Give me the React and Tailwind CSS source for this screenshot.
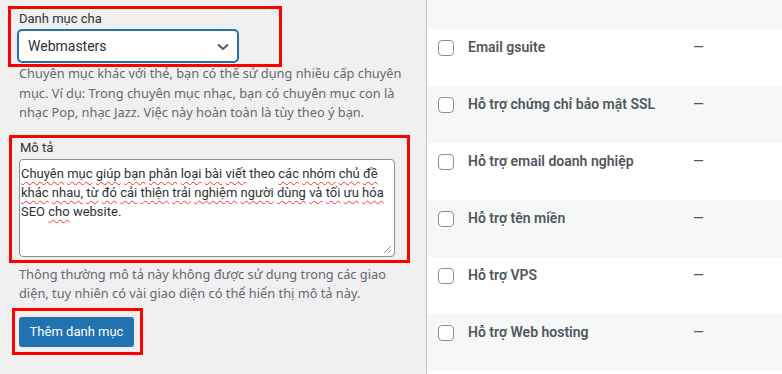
import React from "react";

const font = { fontFamily: "Roboto, 'Noto Sans', 'Liberation Sans', sans-serif" };
const noto = { fontFamily: "'Noto Sans', Roboto, 'Liberation Sans', sans-serif" };

function W({ children }) {
  return (
    <span className="underline decoration-wavy decoration-[#ff3030] decoration-[1px] underline-offset-[3px]">
      {children}
    </span>
  );
}

function Row({ name, gray }) {
  return (
    <div className={`flex items-start h-[57px] pl-[11px] pt-[11px] ${gray ? "bg-[#f6f7f7]" : "bg-white"}`}>
      <div className="w-4 h-4 shrink-0 rounded-[4px] border border-[#8c8f94] bg-white" />
      <div className="ml-[14px] w-[225px] -mt-[3px] text-[14px] leading-[20px] font-semibold text-[#50575e] whitespace-nowrap">
        {name}
      </div>
      <div className="-mt-[3px] text-[14px] leading-[20px] text-[#50575e]">—</div>
    </div>
  );
}

export default function App() {
  return (
    <div className="flex w-[782px] h-[374px] overflow-hidden bg-[#f0f0f1]" style={font}>
      {/* Left column */}
      <div className="w-[427px] shrink-0 border-r border-[#c3c4c7] flex flex-col">
        <div className="ml-[8px] mt-[6px] w-[274px] h-[61px] border-[3px] border-[#ff0000] pl-[7px]">
          <div className="text-[13px] leading-[20px] text-[#2c3338] pl-px">Danh mục cha</div>
          <div className="mt-px w-[220px] h-[32px] rounded-[4px] border border-[#2271b1] shadow-[0_0_0_1px_#2271b1] bg-white flex items-center justify-between pl-[9px] pr-[8px]">
            <span className="text-[14px] text-[#2c3338]">Webmasters</span>
            <svg width="12" height="8" viewBox="0 0 12 8" className="mt-px">
              <path d="M1 1.5l5 4.5 5-4.5" fill="none" stroke="#50575e" strokeWidth="2" />
            </svg>
          </div>
        </div>

        <div className="-mt-[3px] ml-[19px] text-[12.8px] leading-[19.5px] text-[#646970] whitespace-nowrap" style={noto}>
          Chuyên mục khác với thẻ, bạn có thể sử dụng nhiều cấp chuyên
          <br />
          mục. Ví dụ: Trong chuyên mục nhạc, bạn có chuyên mục con là
          <br />
          nhạc Pop, nhạc Jazz. Việc này hoàn toàn là tùy theo ý bạn.
        </div>

        <div className="mt-[12px] ml-[9px] w-[401px] h-[128px] border-[3px] border-[#ff0000] pl-[7px]">
          <div className="text-[13px] leading-[20px] text-[#2c3338] pl-px">Mô tả</div>
          <div className="relative mt-px w-[376px] h-[98px] rounded-[4px] border border-[#8c8f94] bg-white pl-px pt-[4px] text-[13px] leading-[19px] text-[#2c3338] whitespace-nowrap">
            <W>Chuyên</W> <W>mục</W> <W>giúp</W> <W>bạn</W> <W>phân</W> <W>loại</W> <W>bài</W> <W>viết</W> theo <W>các</W> <W>nhóm</W> <W>chủ</W> <W>đề</W>
            <br />
            <W>khác</W> <W>nhau,</W> <W>từ</W> <W>đó</W> <W>cải</W> <W>thiện</W> <W>trải</W> <W>nghiệm</W> <W>người</W> <W>dùng</W> <W>và</W> <W>tối</W> <W>ưu</W> <W>hóa</W>
            <br />
            SEO <W>cho</W> website.
            <svg width="9" height="9" viewBox="0 0 9 9" className="absolute right-[2px] bottom-[2px]">
              <path d="M8 1L1 8M8 5L5 8" stroke="#8c8f94" strokeWidth="1" fill="none" />
            </svg>
          </div>
        </div>

        <div className="mt-[2px] ml-[19px] text-[12.8px] leading-[19.5px] text-[#646970] whitespace-nowrap" style={noto}>
          Thông thường mô tả này không được sử dụng trong các giao
          <br />
          diện, tuy nhiên có vài giao diện có thể hiển thị mô tả này.
        </div>

        <div className="mt-[4px] ml-[12px] w-[131px] h-[47px] border-[3px] border-[#ff0000] pl-[4px] pt-[6px]">
          <button className="w-[115px] h-[30px] rounded-[3px] bg-[#2271b1] text-white text-[13px] leading-[30px] text-center">
            Thêm danh mục
          </button>
        </div>
      </div>

      {/* Right column */}
      <div className="flex-1 flex flex-col bg-white">
        <div className="h-[29px] shrink-0 bg-[#f6f7f7]" />
        <Row name="Email gsuite" />
        <Row name="Hỗ trợ chứng chỉ bảo mật SSL" gray />
        <Row name="Hỗ trợ email doanh nghiệp" />
        <Row name="Hỗ trợ tên miền" gray />
        <Row name="Hỗ trợ VPS" />
        <Row name="Hỗ trợ Web hosting" gray />
        <div className="flex-1 bg-white" />
      </div>
    </div>
  );
}
